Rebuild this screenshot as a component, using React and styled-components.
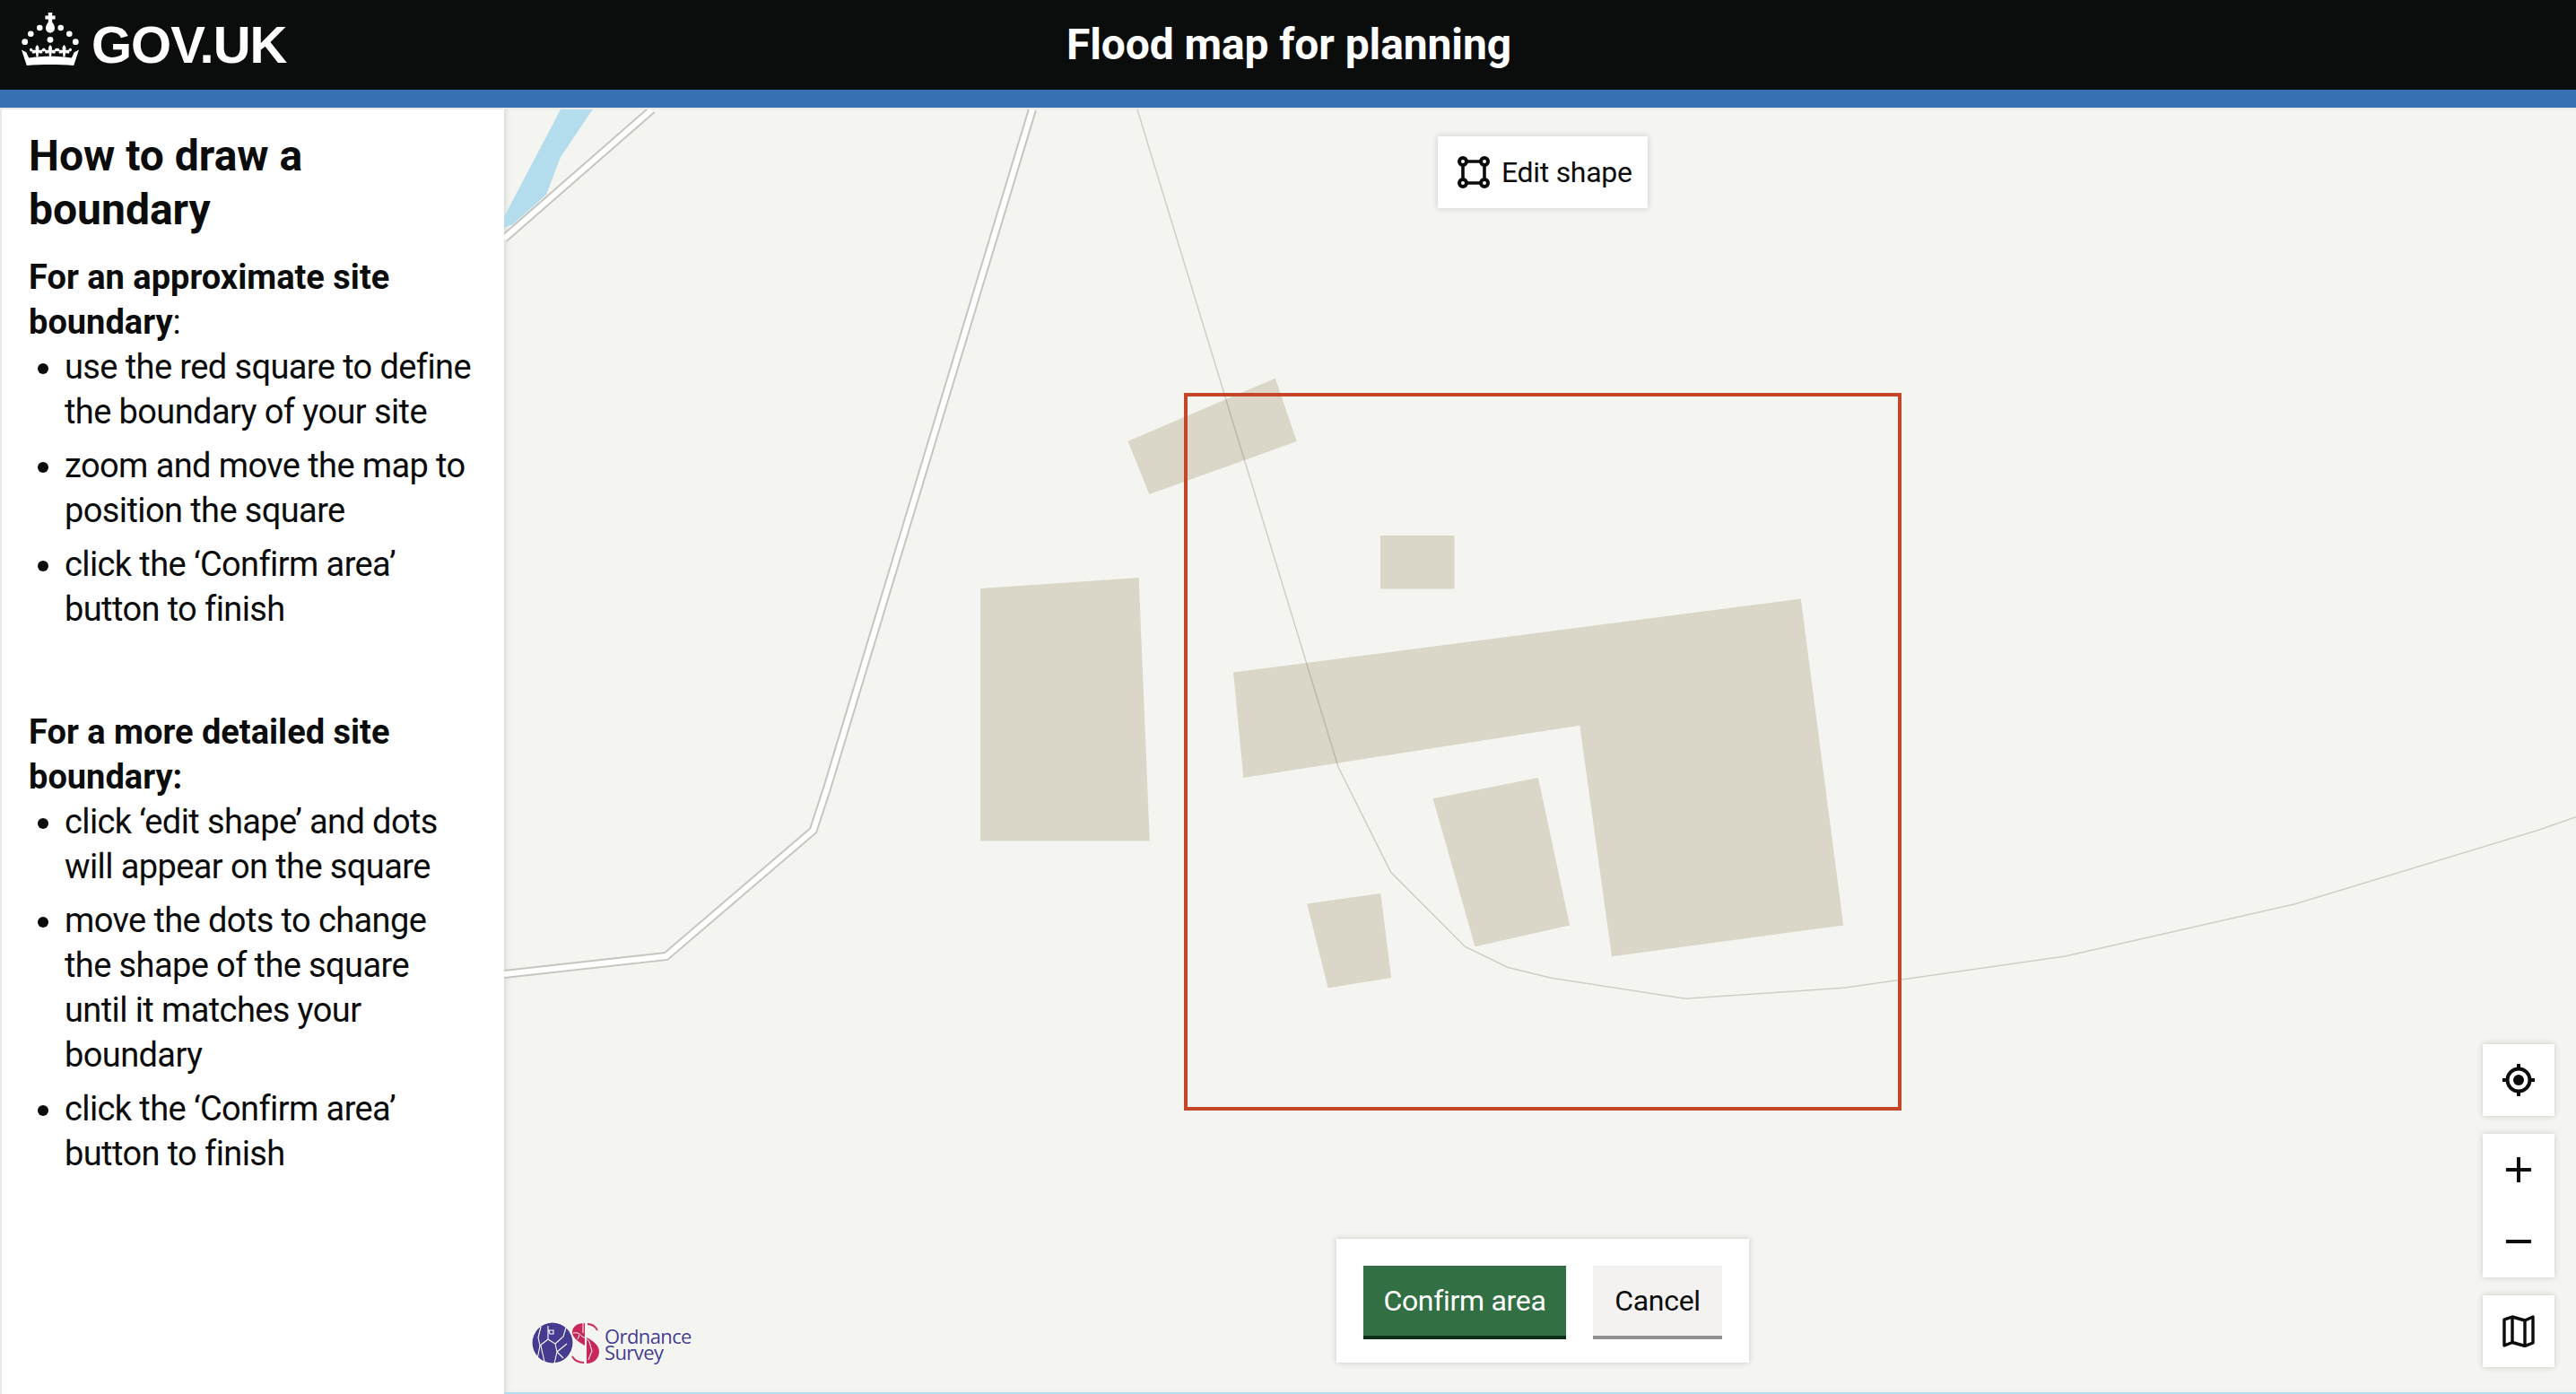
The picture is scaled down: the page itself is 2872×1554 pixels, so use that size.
import React from 'react';
import styled, { createGlobalStyle } from 'styled-components';

const FONT = 'Roboto, "Noto Sans", Arial, sans-serif';

const GlobalStyle = createGlobalStyle`
  html, body {
    margin: 0;
    padding: 0;
    height: 100%;
    overflow: hidden;
    background: #e8e8e6;
  }
  #root { height: 100%; }
  * { box-sizing: border-box; }
`;

const Page = styled.div`
  display: flex;
  flex-direction: column;
  height: 100vh;
  font-family: ${FONT};
  color: #0b0c0c;
`;

const Header = styled.header`
  position: relative;
  display: flex;
  align-items: center;
  justify-content: center;
  flex: 0 0 120px;
  background: #0b0c0c;
  border-bottom: 20px solid #3770b3;
`;

const Brand = styled.div`
  position: absolute;
  left: 24px;
  top: 14px;
  display: flex;
  align-items: flex-start;
  gap: 14px;
`;

const BrandText = styled.span`
  font-family: "Liberation Sans", Arial, sans-serif;
  font-weight: 700;
  font-size: 58px;
  line-height: 59px;
  letter-spacing: -1px;
  color: #fff;
  margin-top: 6px;
`;

const Title = styled.h1`
  margin: 0 0 0 2px;
  font-size: 48px;
  line-height: 100px;
  font-weight: 700;
  letter-spacing: -0.1px;
  color: #fff;
`;

const Body = styled.main`
  display: flex;
  flex: 1;
  min-height: 0;
  padding: 2px 0 0 2px;
`;

const Panel = styled.aside`
  flex: 0 0 560px;
  background: #fff;
  padding: 22px 30px 0;
  font-size: 38px;
  line-height: 50px;
  letter-spacing: -0.6px;

  strong {
    letter-spacing: 0;
  }
`;

const PanelTitle = styled.h2`
  margin: 0 0 20px;
  font-size: 48px;
  line-height: 60px;
  font-weight: 700;
  letter-spacing: 0;
`;

const Lead = styled.p`
  margin: 0;
`;

const Steps = styled.ul`
  margin: 0 0 87px;
  padding: 0 0 0 40px;
  list-style: disc;
`;

const Step = styled.li`
  margin-bottom: 10px;
`;

const MapArea = styled.section`
  position: relative;
  flex: 1;
  overflow: hidden;
  background: #f4f5f0;
  border-bottom: 2px solid #b3dcec;
  box-shadow: inset 6px 0 6px -4px rgba(11, 12, 12, 0.12);
`;

const MapDrawing = styled.svg`
  position: absolute;
  inset: 0;
  width: 100%;
  height: 100%;
  display: block;
`;

const Floating = styled.div`
  position: absolute;
  background: #fff;
  box-shadow: 0 0 7px rgba(11, 12, 12, 0.18);
`;

const EditShape = styled(Floating)`
  top: 30px;
  left: 1041px;
  display: flex;
  align-items: center;
  gap: 13px;
  width: 234px;
  height: 80px;
  padding: 0 0 0 22px;
  font-size: 32px;
  letter-spacing: -0.3px;
  white-space: nowrap;
`;

const ActionBar = styled(Floating)`
  bottom: 33px;
  left: 928px;
  display: flex;
  gap: 30px;
  width: 460px;
  padding: 30px 30px 26px;
`;

const ActionButton = styled.button`
  width: ${p => (p.$primary ? 226 : 144)}px;
  height: 82px;
  padding: 0 0 4px;
  border: 0;
  font-family: ${FONT};
  font-size: 32px;
  letter-spacing: -0.3px;
  color: ${p => (p.$primary ? '#fff' : '#0b0c0c')};
  background: ${p => (p.$primary ? '#326f42' : '#f3f2f1')};
  box-shadow: inset 0 -4px 0 ${p => (p.$primary ? '#0f2e17' : '#929191')};
`;

const Controls = styled.div`
  position: absolute;
  right: 24px;
  bottom: 28px;
  display: flex;
  flex-direction: column;
  gap: 20px;
`;

const ControlGroup = styled.div`
  display: flex;
  flex-direction: column;
  background: #fff;
  box-shadow: 0 0 7px rgba(11, 12, 12, 0.18);
`;

const ControlButton = styled.div`
  display: flex;
  align-items: center;
  justify-content: center;
  width: 80px;
  height: 80px;
`;

const OsLogo = styled.div`
  position: absolute;
  left: 30px;
  bottom: 30px;
  display: flex;
  align-items: center;
  gap: 4px;
`;

const OsName = styled.div`
  font-family: "Open Sans", sans-serif;
  font-size: 22px;
  line-height: 18px;
  letter-spacing: -0.6px;
  color: #453c90;
  text-shadow: 0 0 3px #fff;
`;

const Crown = () => (
  <svg width="64" height="59" viewBox="0 0 64 59" fill="#fff">
    <path d="M29.8 0h4.400v3.400h3.400v4.200h-3.400v3.200c2 2.400 2.800 4.600 2.800 6.600 0 2.800-2.200 5-5 5s-5-2.200-5-5c0-2 .8-4.200 2.800-6.600V7.600h-3.400V3.400h3.400z" />
    <circle cx="20.300" cy="17" r="3.300" />
    <circle cx="43.700" cy="17" r="3.300" />
    <circle cx="10.300" cy="23.700" r="3.300" />
    <circle cx="53.300" cy="23.700" r="3.300" />
    <circle cx="3.700" cy="32.700" r="3.400" />
    <circle cx="60.300" cy="32.700" r="3.400" />
    <circle cx="32" cy="30.300" r="3.400" />
    {[17.5, 32, 47.5].map(x => (
      <path
        key={x}
        transform={`translate(${x} 36)`}
        d="M0 0c2 2 2.600 3.800 1.600 5.800h3.400c.4-1.600 1.600-2.400 2.800-1.800 1.200.8.800 2.800-.8 3.400l-1.200-.6v2.400c-1.800.8-3.200.4-4.200-.8l-.6 5h-2l-.6-5c-1 1.200-2.400 1.600-4.200.8V6.800l-1.200.6c-1.600-.6-2-2.600-.8-3.400 1.200-.6 2.400.2 2.800 1.800h3.400C-2.600 3.800-2 2 0 0z"
      />
    ))}
    <path d="M0 41.500l5.200 2.800 3 6.200c15-2.400 32.600-2.400 47.600 0l3-6.200 5.200-2.800-5.800 17.500c-16-1.400-36.400-1.400-52.400 0z" />
  </svg>
);

const EditIcon = () => (
  <svg width="36" height="36" viewBox="0 0 36 36">
    <path d="M6 6h24v24H6z" fill="none" stroke="#0b0c0c" strokeWidth="3.600" />
    {[[6, 6], [30, 6], [6, 30], [30, 30]].map(([x, y]) => (
      <circle key={`${x}-${y}`} cx={x} cy={y} r="4" fill="#fff" stroke="#0b0c0c" strokeWidth="4" />
    ))}
  </svg>
);

const LocateIcon = () => (
  <svg width="36" height="36" viewBox="0 0 36 36" fill="#0b0c0c">
    <circle cx="18" cy="18" r="12.500" fill="none" stroke="#0b0c0c" strokeWidth="4" />
    <circle cx="18" cy="18" r="6" />
    <path d="M16 0h4v6h-4zM16 30h4v6h-4zM0 16h6v4H0zM30 16h6v4h-6z" />
  </svg>
);

const PlusIcon = () => (
  <svg width="28" height="28" viewBox="0 0 28 28" fill="#0b0c0c">
    <path d="M12 0h4v12h12v4H16v12h-4V16H0v-4h12z" />
  </svg>
);

const MinusIcon = () => (
  <svg width="28" height="28" viewBox="0 0 28 28" fill="#0b0c0c">
    <path d="M0 12h28v4H0z" />
  </svg>
);

const MapIcon = () => (
  <svg width="36" height="36" viewBox="0 0 36 36" fill="none" stroke="#0b0c0c" strokeWidth="3.400" strokeLinejoin="round">
    <path d="M2 5l9-3 14 4 9-4v29l-9 3.500-14-4-9 3.500z" />
    <path d="M11 2v29M25 6v28.500" />
  </svg>
);

const OsMark = () => (
  <svg width="78" height="48" viewBox="0 0 78 48">
    <circle cx="24" cy="23" r="23.500" fill="#fff" />
    <circle cx="24" cy="23" r="22.500" fill="#453c90" />
    <g fill="none" stroke="#fff" strokeWidth="1.100">
      <path d="M11 5l-3 12 2 9-3 15M11 26l4 18M10 26l9-7 8 5 2 9-3 13M19 4v15M27 24l9-8 3-10M29 33l11-9M20 9h5v4h-4zM29 33l7 7" />
    </g>
    <path d="M60 1C50 1 46 6 46 11c0 6 6 10 14 15z" fill="#c9285a" />
    <path d="M62 17c8 4 14 9 14 16s-6 13-14 13z" fill="#c9285a" />
    <path d="M63 2c5 0 9 3 11 7M59 45c-7 0-11-3-13-7" fill="none" stroke="#c9285a" strokeWidth="1.800" />
    <g fill="none" stroke="#fff" strokeWidth="1">
      <path d="M47 12c5-1 8 1 10 4 3 1 7 3 8 6M65 22l3 10-4 10M58 1v11M54 14l-2 5" />
    </g>
  </svg>
);

const buildings = [
  '1257.500,491.800 1421.800,421.800 1445.700,492.100 1281.400,551.100',
  '1093.200,656 1269.600,643.900 1281.800,937.500 1093.200,937.500',
  '1539,597 1621.500,597 1621.500,656.500 1539,656.500',
  '1375.100,749.500 2007.800,667.600 2055.200,1031.500 1797,1066.300 1761.300,808.800 1386.300,866.900',
  '1597.600,890.300 1714.900,866.900 1750.100,1031.500 1644.500,1055.200',
  '1457.200,1007.400 1539.400,995.900 1551.100,1090 1480.700,1101.500',
];

const roads = [
  '727,122 562,266',
  '562,1086 742.700,1066 906.700,925.700 921.700,880 1151,122',
];

const PATH = '1268,122 1353,400 1492,855 1550.600,972.200 1633.300,1055.200 1680.700,1078.200 1728.200,1090 1879,1113.200 2055.500,1101.200 2302.500,1066 2558.900,1007.700 2828.900,925.700 2872,910.700';

const MapLayer = () => (
  <MapDrawing viewBox="562 122 2310 1430" preserveAspectRatio="none">
    <polygon points="625,122 660.700,122 625,175 609,217 572,250 562,254 562,241.700" fill="#b3dcec" />
    {buildings.map(points => (
      <polygon key={points} points={points} fill="#dad7c8" />
    ))}
    <polyline points={PATH} fill="none" stroke="#6f6d62" strokeOpacity="0.28" strokeWidth="1.500" />
    {roads.map(points => (
      <g key={points} fill="none" strokeLinejoin="miter">
        <polyline points={points} stroke="#c6c6c0" strokeWidth="10" />
        <polyline points={points} stroke="#fff" strokeWidth="6" />
      </g>
    ))}
    <rect x="1322" y="440" width="796" height="796" fill="none" stroke="#c54529" strokeWidth="4" />
  </MapDrawing>
);

const App = () => (
  <Page>
    <GlobalStyle />
    <Header>
      <Brand>
        <Crown />
        <BrandText>GOV.UK</BrandText>
      </Brand>
      <Title>Flood map for planning</Title>
    </Header>
    <Body>
      <Panel>
        <PanelTitle>How to draw a boundary</PanelTitle>
        <Lead><strong>For an approximate site boundary</strong>:</Lead>
        <Steps>
          <Step>use the red square to define the boundary of your site</Step>
          <Step>zoom and move the map to position the square</Step>
          <Step>click the ‘Confirm area’ button to finish</Step>
        </Steps>
        <Lead><strong>For a more detailed site boundary:</strong></Lead>
        <Steps>
          <Step>click ‘edit shape’ and dots will appear on the square</Step>
          <Step>move the dots to change the shape of the square until it matches your boundary</Step>
          <Step>click the ‘Confirm area’ button to finish</Step>
        </Steps>
      </Panel>
      <MapArea>
        <MapLayer />
        <EditShape>
          <EditIcon />
          Edit shape
        </EditShape>
        <ActionBar>
          <ActionButton $primary>Confirm area</ActionButton>
          <ActionButton>Cancel</ActionButton>
        </ActionBar>
        <Controls>
          <ControlGroup>
            <ControlButton><LocateIcon /></ControlButton>
          </ControlGroup>
          <ControlGroup>
            <ControlButton><PlusIcon /></ControlButton>
            <ControlButton><MinusIcon /></ControlButton>
          </ControlGroup>
          <ControlGroup>
            <ControlButton><MapIcon /></ControlButton>
          </ControlGroup>
        </Controls>
        <OsLogo>
          <OsMark />
          <OsName>Ordnance<br />Survey</OsName>
        </OsLogo>
      </MapArea>
    </Body>
  </Page>
);

export default App;
